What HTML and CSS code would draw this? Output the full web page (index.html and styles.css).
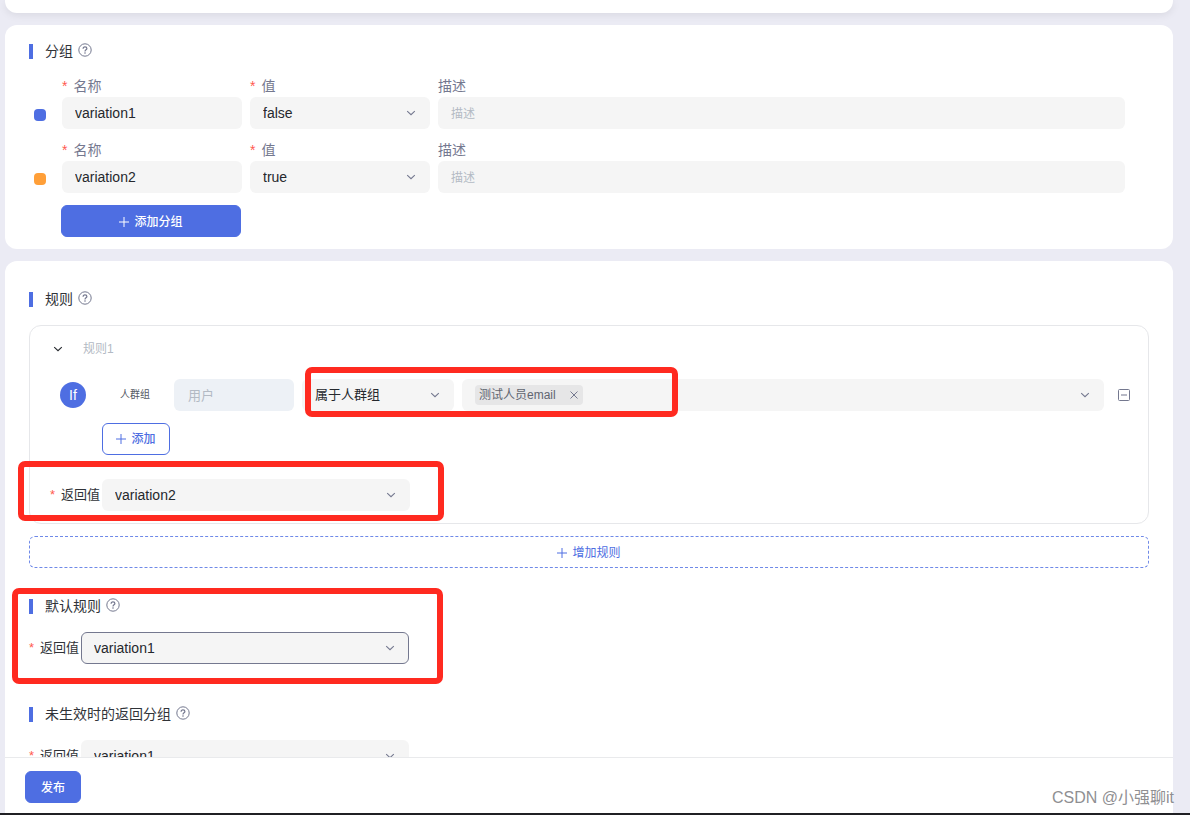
FILE: index.html
```
<!DOCTYPE html>
<html lang="zh-CN">
<head>
<meta charset="utf-8">
<meta name="viewport" content="width=device-width, initial-scale=1">
<title>规则</title>
<link rel="stylesheet" href="styles.css">
</head>
<body>
<svg class="sprite" aria-hidden="true">
  <symbol id="chevron" viewBox="0 0 10 10"><path d="M1.200 3.200L5 6.700l3.800-3.500" fill="none" stroke="currentColor" stroke-width="1.100"/></symbol>
  <symbol id="plus" viewBox="0 0 10 10"><path d="M5 0v10M0 5h10" fill="none" stroke="currentColor" stroke-width="1"/></symbol>
  <symbol id="help" viewBox="0 0 14 14"><circle cx="7" cy="7" r="6.2" fill="none" stroke="currentColor" stroke-width="1"/><path d="M5.100 5.700c0-1.200.800-1.900 1.900-1.900s1.900.700 1.900 1.700c0 1.300-1.900 1.300-1.900 2.900" fill="none" stroke="currentColor" stroke-width="1.200"/><circle cx="7" cy="10" r=".8" fill="currentColor"/></symbol>
  <symbol id="minus-box" viewBox="0 0 12 12"><rect x=".5" y=".5" width="11" height="11" rx="1" fill="none" stroke="currentColor"/><path d="M3 6h6" stroke="currentColor" stroke-width="2" opacity=".5"/></symbol>
  <symbol id="close" viewBox="0 0 10 10"><path d="M1.500 1.500l7 7M8.500 1.500l-7 7" fill="none" stroke="currentColor" stroke-width="1"/></symbol>
</svg>

<main class="scroll">
  <section class="card card-top"></section>

  <section class="card card-groups">
    <h2 class="title">分组<svg class="help"><use href="#help"/></svg></h2>
    <div class="variations">
      <div class="variation">
        <span class="swatch swatch-blue"></span>
        <div class="field">
          <label class="required" for="name1">名称</label>
          <input class="control" id="name1" value="variation1">
        </div>
        <div class="field">
          <label class="required" for="value1">值</label>
          <div class="select">
            <select class="control" id="value1"><option>false</option><option>true</option></select>
            <svg class="chevron"><use href="#chevron"/></svg>
          </div>
        </div>
        <div class="field">
          <label for="desc1">描述</label>
          <input class="control" id="desc1" placeholder="描述">
        </div>
      </div>
      <div class="variation">
        <span class="swatch swatch-orange"></span>
        <div class="field">
          <label class="required" for="name2">名称</label>
          <input class="control" id="name2" value="variation2">
        </div>
        <div class="field">
          <label class="required" for="value2">值</label>
          <div class="select">
            <select class="control" id="value2"><option>true</option><option>false</option></select>
            <svg class="chevron"><use href="#chevron"/></svg>
          </div>
        </div>
        <div class="field">
          <label for="desc2">描述</label>
          <input class="control" id="desc2" placeholder="描述">
        </div>
      </div>
    </div>
    <button class="button button-primary button-wide" type="button"><svg class="plus"><use href="#plus"/></svg>添加分组</button>
  </section>

  <section class="card card-rules">
    <h2 class="title">规则<svg class="help"><use href="#help"/></svg></h2>
    <div class="rule">
      <div class="rule-head">
        <button class="icon-button toggle" type="button" aria-label="收起"><svg class="chevron"><use href="#chevron"/></svg></button>
        <span>规则1</span>
      </div>
      <div class="condition">
        <span class="if">If</span>
        <label class="condition-type" for="subject">人群组</label>
        <input class="control subject" id="subject" placeholder="用户" disabled>
        <div class="select operator">
          <select class="control" aria-label="条件"><option>属于人群组</option></select>
          <svg class="chevron"><use href="#chevron"/></svg>
        </div>
        <div class="control multi">
          <span class="tag">测试人员email<button class="icon-button" type="button" aria-label="移除"><svg class="close"><use href="#close"/></svg></button></span>
          <button class="icon-button" type="button" aria-label="展开"><svg class="chevron"><use href="#chevron"/></svg></button>
        </div>
        <button class="icon-button remove" type="button" aria-label="删除条件"><svg class="minus-box"><use href="#minus-box"/></svg></button>
        <span class="mark mark-condition"></span>
      </div>
      <button class="button button-outline" type="button"><svg class="plus"><use href="#plus"/></svg>添加</button>
      <div class="return">
        <label class="required" for="return1">返回值</label>
        <div class="select">
          <select class="control" id="return1"><option>variation2</option><option>variation1</option></select>
          <svg class="chevron"><use href="#chevron"/></svg>
        </div>
        <span class="mark mark-return"></span>
      </div>
    </div>
    <button class="button button-dashed" type="button"><svg class="plus"><use href="#plus"/></svg>增加规则</button>

    <div class="fallback">
      <h2 class="title">默认规则<svg class="help"><use href="#help"/></svg></h2>
      <div class="return">
        <label class="required" for="return2">返回值</label>
        <div class="select">
          <select class="control control-active" id="return2"><option>variation1</option><option>variation2</option></select>
          <svg class="chevron"><use href="#chevron"/></svg>
        </div>
      </div>
      <span class="mark mark-fallback"></span>
    </div>

    <div class="fallback">
      <h2 class="title">未生效时的返回分组<svg class="help"><use href="#help"/></svg></h2>
      <div class="return">
        <label class="required" for="return3">返回值</label>
        <div class="select">
          <select class="control" id="return3"><option>variation1</option><option>variation2</option></select>
          <svg class="chevron"><use href="#chevron"/></svg>
        </div>
      </div>
    </div>
  </section>
</main>

<footer class="footer">
  <button class="button button-primary" type="button">发布</button>
</footer>
<span class="watermark">CSDN @小强聊it</span>
</body>
</html>
```
FILE: styles.css
```
* {
  box-sizing: border-box;
}

body {
  margin: 0;
  height: 100vh;
  display: flex;
  flex-direction: column;
  overflow: hidden;
  border-bottom: 2px solid #202024;
  background: #ebebf4;
  color: #303338;
  font: 14px/20px "Liberation Sans", "Noto Sans CJK SC", sans-serif;
}

.sprite {
  position: absolute;
  width: 0;
  height: 0;
}

.scroll {
  flex: 1;
  min-height: 0;
  overflow: hidden;
  display: flex;
  flex-direction: column;
  gap: 12px;
  padding: 0 17px 0 5px;
}

.card {
  flex: none;
  border-radius: 12px;
  background: #fff;
}

.card-top {
  height: 13px;
  border-radius: 0 0 12px 12px;
  box-shadow: 0 2px 8px rgba(0, 0, 0, 0.08);
}

.card-groups {
  position: relative;
  padding: 16px 24px 12px;
}

.card-rules {
  padding: 28px 24px 24px;
}

.title {
  display: flex;
  align-items: center;
  margin: 0;
  font-size: 14px;
  font-weight: 400;
}

.title::before {
  content: "";
  width: 4px;
  height: 15px;
  margin-right: 12px;
  background: #4e6ee2;
}

.help {
  width: 14px;
  height: 14px;
  margin: 0 0 2px 5px;
  color: #74788f;
}

.variations {
  display: grid;
  gap: 10px;
  margin: 14px 24px 12px 5px;
}

.variation {
  display: grid;
  grid-template-columns: 20px 180px 180px 1fr;
  gap: 8px;
}

.swatch {
  align-self: end;
  width: 12px;
  height: 12px;
  margin-bottom: 8px;
  border-radius: 4px;
}

.swatch-blue {
  background: #4e6ee2;
}

.swatch-orange {
  background: #ff9f38;
}

.field {
  display: grid;
  grid-template-rows: 22px 32px;
  color: #74788f;
  line-height: 22px;
}

.required::before {
  content: "*";
  margin-right: 6px;
  color: #ff5a50;
}

.control {
  width: 100%;
  height: 32px;
  padding: 0 12px;
  border: 1px solid transparent;
  border-radius: 6px;
  background: #f5f5f5;
  color: #25282d;
  font: inherit;
  line-height: 20px;
  appearance: none;
}

.control::placeholder {
  color: #b3bac4;
  font-size: 12px;
}

.control-active {
  border-color: #74788f;
}

.select {
  display: grid;
  align-items: center;
}

.select > * {
  grid-area: 1 / 1;
}

.select .chevron {
  justify-self: end;
  margin-right: 14px;
  pointer-events: none;
}

.chevron,
.plus,
.close {
  width: 10px;
  height: 10px;
}

.chevron,
.close {
  color: #74788f;
}

.icon-button {
  display: flex;
  padding: 0;
  border: 0;
  background: none;
  color: #74788f;
}

.button {
  display: flex;
  align-items: center;
  justify-content: center;
  gap: 5px;
  height: 32px;
  padding: 1px 15px 0;
  border: 1px solid #4e6ee2;
  border-radius: 6px;
  background: #fff;
  color: #4e6ee2;
  font: inherit;
  font-size: 12px;
}

.button-primary {
  background: #4e6ee2;
  color: #fff;
  font-weight: 500;
}

.button-wide {
  width: 180px;
  margin-left: 32px;
}

.button-outline {
  width: 68px;
  margin: 12px 0 24px 72px;
  padding: 0;
  font-weight: 500;
}

.button-dashed {
  width: 100%;
  margin-top: 12px;
  border: 1px dashed #6f89e8;
}

.rule {
  margin-top: 16px;
  padding: 13px 18px 12px 0;
  border: 1px solid #e6e7ea;
  border-radius: 12px;
}

.rule-head {
  display: flex;
  align-items: center;
  gap: 20px;
  margin-left: 23px;
  color: #b3bac4;
  font-size: 12px;
}

.toggle .chevron {
  color: #25282d;
}

.condition {
  position: relative;
  display: grid;
  grid-template-columns: 52px 46px 120px 152px 1fr 18px;
  align-items: center;
  column-gap: 8px;
  margin: 20px 0 0 30px;
}

.if {
  width: 26px;
  height: 26px;
  border-radius: 50%;
  background: #4e6ee2;
  color: #fff;
  line-height: 26px;
  text-align: center;
}

.condition-type {
  color: #555a64;
  font-size: 10px;
  white-space: nowrap;
}

.subject {
  padding: 0 13px;
  background: #edf1f6;
}

.subject::placeholder {
  font-size: 13px;
}

.operator .control {
  font-size: 13px;
}

.multi {
  display: flex;
  align-items: center;
  justify-content: space-between;
  padding-right: 13px;
}

.tag {
  display: flex;
  align-items: center;
  gap: 13px;
  height: 20px;
  padding: 0 4px;
  border-radius: 4px;
  background: #e6e6e7;
  color: #606570;
  font-size: 12px;
}

.remove {
  justify-content: flex-end;
}

.minus-box {
  width: 12px;
  height: 12px;
}

.return {
  position: relative;
  display: grid;
  grid-template-columns: 52px 328px;
  align-items: center;
  font-size: 13px;
}

.return .control {
  font-size: 14px;
}

.rule .return {
  grid-template-columns: 52px 308px;
  margin-left: 20px;
}

.fallback {
  position: relative;
  display: grid;
  gap: 16px;
  margin-top: 28px;
}

.fallback + .fallback {
  margin-top: 40px;
}

.mark {
  position: absolute;
  border: 6px solid #ff2a20;
  border-radius: 7px;
  pointer-events: none;
}

.mark-condition {
  top: -12px;
  left: 245px;
  width: 373px;
  height: 50px;
}

.mark-return {
  top: -18px;
  left: -32px;
  width: 426px;
  height: 60px;
}

.mark-fallback {
  top: -8px;
  left: -17px;
  width: 431px;
  height: 96px;
}

.footer {
  flex: none;
  margin: 0 17px 0 5px;
  padding: 13px 20px 10px;
  border-top: 1px solid #e9eaec;
  background: #fff;
}

.watermark {
  position: absolute;
  right: 16px;
  bottom: 7px;
  color: #8f8f92;
  font-size: 16px;
}
```
